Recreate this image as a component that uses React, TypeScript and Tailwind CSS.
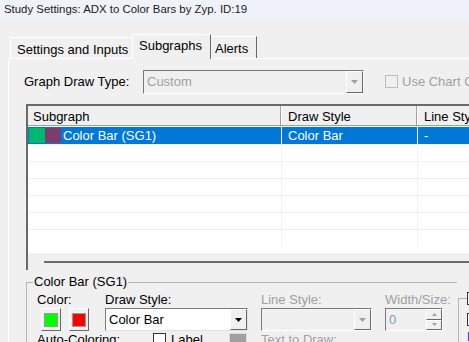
import React from "react";

const font = { fontFamily: '"Liberation Sans", Arial, sans-serif' };

function Caret({ disabled }: { disabled?: boolean }) {
  return (
    <svg width="7" height="4" viewBox="0 0 7 4">
      <path d="M0 0h7L3.5 4z" fill={disabled ? "#a0a0a0" : "#000"} />
    </svg>
  );
}

function DropButton({ disabled }: { disabled?: boolean }) {
  return (
    <div className="w-[17px] h-full shrink-0 flex items-center justify-center bg-[#f0f0f0] border-t border-l border-t-white border-l-white border-r border-b border-r-[#696969] border-b-[#696969]">
      <Caret disabled={disabled} />
    </div>
  );
}

function Checkbox({ disabled }: { disabled?: boolean }) {
  return (
    <div
      className={`w-[13px] h-[13px] shrink-0 border ${
        disabled ? "border-[#bcbcbc] bg-[#f0f0f0]" : "border-[#333] bg-white"
      }`}
    />
  );
}

const rows = [0, 1, 2, 3, 4, 5];

export default function App() {
  return (
    <div
      className="w-[469px] h-[342px] overflow-hidden bg-[#f0f0f0] text-[13px] text-black leading-none relative"
      style={font}
    >
      {/* title bar */}
      <div className="h-[21px] bg-[#eff3f9] pl-[4px] pt-[4px] text-[11.4px] text-[#1a1a1a] whitespace-nowrap">
        Study Settings: ADX to Color Bars by Zyp. ID:19
      </div>

      {/* tabs */}
      <div className="flex items-end h-[38px] pl-[10px] relative z-10 whitespace-nowrap">
        <div className="h-[22px] w-[123px] shrink-0 border-l border-t border-white border-r border-r-[#a0a0a0] pl-[6px] pt-[5px]">
          Settings and Inputs
        </div>
        <div className="h-[25px] w-[79px] shrink-0 -ml-px bg-[#f0f0f0] border-l border-t border-white border-r border-r-[#696969] pl-[6px] pt-[4px]">
          Subgraphs
        </div>
        <div className="h-[22px] w-[46px] shrink-0 border-t border-white border-r border-r-[#696969] pl-[4px] pt-[5px] mb-px">
          Alerts
        </div>
      </div>

      {/* panel */}
      <div className="ml-[8px] -mt-px border-l border-t border-white h-[300px] pl-[15px] whitespace-nowrap">
        <div className="flex items-center mt-[11px] h-[23px]">
          <span className="w-[119px] shrink-0">Graph Draw Type:</span>
          <div className="w-[221px] h-[24px] shrink-0 border-t border-l border-[#7a7a7a] border-r border-b border-r-white border-b-white flex">
            <div className="flex-1 flex items-center pl-[3px] text-[#a0a0a0] bg-[#f0f0f0]">Custom</div>
            <DropButton disabled />
          </div>
          <div className="ml-[21px] shrink-0">
            <Checkbox disabled />
          </div>
          <span className="ml-[4px] shrink-0 text-[#a0a0a0]">Use Chart Color</span>
        </div>

        {/* list */}
        <div className="mt-[11px] ml-[2px] w-[460px] h-[166px] border-l-2 border-t-2 border-[#6a6a6a] flex flex-col">
          <div className="flex h-[20px] shrink-0 bg-[#f0f0f0] border-b border-[#a0a0a0]">
            <div className="w-[253px] shrink-0 pl-[5px] pt-[4px] border-r border-[#a0a0a0]">Subgraph</div>
            <div className="w-[136px] shrink-0 pl-[6px] pt-[4px] border-r border-[#a0a0a0] border-l border-l-white">Draw Style</div>
            <div className="flex-1 pl-[6px] pt-[4px] border-l border-l-white overflow-hidden">Line Style</div>
          </div>
          <div className="bg-white h-[127px] shrink-0 pt-px">
            <div className="flex h-[17px] bg-[#0078d7] text-white">
              <div className="w-[253px] shrink-0 flex items-center pl-px">
                <div className="w-[16px] h-[15px] bg-[#00b86f]" />
                <div className="w-[16px] h-[15px] bg-[#7c3c6e]" />
                <span className="ml-[2px]">Color Bar (SG1)</span>
              </div>
              <div className="w-[136px] shrink-0 pl-[6px] flex items-center border-l border-white">Color Bar</div>
              <div className="flex-1 pl-[6px] flex items-center border-l border-white">-</div>
            </div>
            {rows.map((r) => (
              <div key={r} className="flex h-[17px] border-t border-[#f0f0f0]">
                <div className="w-[253px] shrink-0" />
                <div className="w-[136px] shrink-0 border-l border-[#f0f0f0]" />
                <div className="flex-1 border-l border-[#f0f0f0]" />
              </div>
            ))}
          </div>
          <div className="flex-1 bg-[#f0f0f0] pl-[16px] pt-[8px]">
            <div className="h-[2px] bg-[#6a6a6a]" />
          </div>
        </div>

        {/* group: Color Bar (SG1) */}
        <div className="mt-[12px] ml-[2px] flex">
          <div className="relative w-[431px] h-[80px] shrink-0 border-l border-t border-[#b5b5b5] pl-[10px] pt-[10px]">
            <span className="absolute -top-[8px] left-[6px] px-[1px] bg-[#f0f0f0]">Color Bar (SG1)</span>
            <div className="flex">
              <div className="w-[68px] shrink-0">
                <div>Color:</div>
                <div className="flex gap-[8px] mt-[2px] ml-[4px]">
                  <div className="w-[20px] h-[23px] border border-t-white border-l-white border-r-[#696969] border-b-[#696969] flex items-center justify-center">
                    <div className="w-[14px] h-[14px] bg-[#00ff00] border border-[#9a9a9a]" />
                  </div>
                  <div className="w-[20px] h-[23px] border border-t-white border-l-white border-r-[#696969] border-b-[#696969] flex items-center justify-center">
                    <div className="w-[14px] h-[14px] bg-[#ff0000] border border-[#9a9a9a]" />
                  </div>
                </div>
              </div>
              <div className="w-[156px] shrink-0">
                <div>Draw Style:</div>
                <div className="mt-[2px] w-[143px] h-[23px] border-t border-l border-[#7a7a7a] border-r border-b border-r-[#e0e0e0] border-b-[#e0e0e0] bg-white flex">
                  <div className="flex-1 flex items-center pl-[3px]">Color Bar</div>
                  <DropButton />
                </div>
              </div>
              <div className="w-[124px] shrink-0">
                <div className="text-[#a0a0a0]">Line Style:</div>
                <div className="mt-[2px] w-[111px] h-[23px] border-t border-l border-[#7a7a7a] border-r border-b border-r-white border-b-white flex">
                  <div className="flex-1" />
                  <DropButton disabled />
                </div>
              </div>
              <div className="w-[74px] shrink-0">
                <div className="text-[#a0a0a0]">Width/Size:</div>
                <div className="mt-[2px] w-[58px] h-[23px] border-t border-l border-[#7a7a7a] border-r border-b border-r-white border-b-white flex">
                  <div className="flex-1 flex items-center pl-[3px] text-[#7f9cc0]">0</div>
                  <div className="w-[16px] flex flex-col">
                    <div className="flex-1 flex items-center justify-center border border-t-white border-l-white border-r-[#696969] border-b-[#696969]">
                      <svg width="5" height="3" viewBox="0 0 5 3"><path d="M2.5 0L5 3H0z" fill="#a0a0a0" /></svg>
                    </div>
                    <div className="flex-1 flex items-center justify-center border border-t-white border-l-white border-r-[#696969] border-b-[#696969]">
                      <svg width="5" height="3" viewBox="0 0 5 3"><path d="M0 0h5L2.5 3z" fill="#a0a0a0" /></svg>
                    </div>
                  </div>
                </div>
              </div>
            </div>
            <div className="flex items-start mt-[2px]">
              <span className="w-[116px] shrink-0">Auto-Coloring:</span>
              <Checkbox />
              <span className="ml-[5px] w-[58px] shrink-0">Label</span>
              <div className="w-[18px] h-[18px] shrink-0 bg-[#a0a0a0] border border-[#dcdcdc]" />
              <span className="ml-[14px] text-[#a0a0a0]">Text to Draw:</span>
            </div>
          </div>
          {/* right group (cut off) */}
          <div className="relative ml-px mt-[16px] w-[20px] h-[60px] shrink-0 border-l border-t border-[#b5b5b5] pl-[8px] pt-[14px]">
            <div className="absolute -top-[7px] left-[8px] bg-[#f0f0f0]">
              <Checkbox />
            </div>
            <Checkbox />
            <div className="mt-[4px] text-[#0033cc]">H</div>
          </div>
        </div>
      </div>
    </div>
  );
}
